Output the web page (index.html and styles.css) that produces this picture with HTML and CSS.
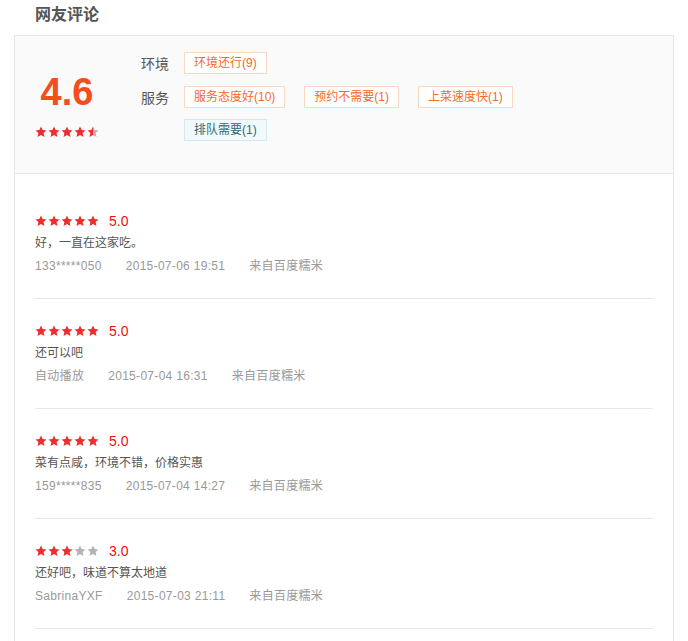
FILE: index.html
```html
<!DOCTYPE html>
<html lang="zh-CN">
<head>
    <meta charset="UTF-8">
    <meta name="viewport" content="width=device-width, initial-scale=1.0">
    <title>网友评论</title>
    <link rel="stylesheet" href="styles.css">
</head>
<body>
    <!-- 星星图形 -->
    <svg class="defs" width="0" height="0">
        <defs>
            <linearGradient id="half">
                <stop offset="50%" stop-color="#ee2d2d"/>
                <stop offset="50%" stop-color="#b3b3b3"/>
            </linearGradient>
            <symbol id="star" viewBox="0 0 24 24">
                <path d="M12 1l3.3 7.1 7.7.8-5.8 5.2 1.7 7.7L12 17.8l-6.9 4 1.7-7.7L1 8.9l7.7-.8z"/>
            </symbol>
        </defs>
    </svg>

    <div class="wrap">
        <div class="title">网友评论</div>

        <div class="box">
            <!-- 评分汇总 -->
            <div class="summary">
                <div class="score_col">
                    <div class="score">4.6</div>
                    <div class="stars">
                        <svg class="on"><use href="#star"/></svg>
                        <svg class="on"><use href="#star"/></svg>
                        <svg class="on"><use href="#star"/></svg>
                        <svg class="on"><use href="#star"/></svg>
                        <svg class="half"><use href="#star"/></svg>
                    </div>
                </div>
                <div class="tags">
                    <div class="tag_row">
                        <span class="label">环境</span>
                        <span class="tag">环境还行(9)</span>
                    </div>
                    <div class="tag_row">
                        <span class="label">服务</span>
                        <span class="tag">服务态度好(10)</span>
                        <span class="tag">预约不需要(1)</span>
                        <span class="tag">上菜速度快(1)</span>
                    </div>
                    <div class="tag_row">
                        <span class="label"></span>
                        <span class="tag tag_blue">排队需要(1)</span>
                    </div>
                </div>
            </div>

            <!-- 评论列表 -->
            <div class="list">
                <div class="review">
                    <div class="rate">
                        <span class="stars">
                            <svg class="on"><use href="#star"/></svg>
                            <svg class="on"><use href="#star"/></svg>
                            <svg class="on"><use href="#star"/></svg>
                            <svg class="on"><use href="#star"/></svg>
                            <svg class="on"><use href="#star"/></svg>
                        </span>
                        <span class="num">5.0</span>
                    </div>
                    <div class="text">好，一直在这家吃。</div>
                    <div class="meta"><span>133*****050</span><span>2015-07-06 19:51</span><span>来自百度糯米</span></div>
                </div>
                <div class="review">
                    <div class="rate">
                        <span class="stars">
                            <svg class="on"><use href="#star"/></svg>
                            <svg class="on"><use href="#star"/></svg>
                            <svg class="on"><use href="#star"/></svg>
                            <svg class="on"><use href="#star"/></svg>
                            <svg class="on"><use href="#star"/></svg>
                        </span>
                        <span class="num">5.0</span>
                    </div>
                    <div class="text">还可以吧</div>
                    <div class="meta"><span>自动播放</span><span>2015-07-04 16:31</span><span>来自百度糯米</span></div>
                </div>
                <div class="review">
                    <div class="rate">
                        <span class="stars">
                            <svg class="on"><use href="#star"/></svg>
                            <svg class="on"><use href="#star"/></svg>
                            <svg class="on"><use href="#star"/></svg>
                            <svg class="on"><use href="#star"/></svg>
                            <svg class="on"><use href="#star"/></svg>
                        </span>
                        <span class="num">5.0</span>
                    </div>
                    <div class="text">菜有点咸，环境不错，价格实惠</div>
                    <div class="meta"><span>159*****835</span><span>2015-07-04 14:27</span><span>来自百度糯米</span></div>
                </div>
                <div class="review">
                    <div class="rate">
                        <span class="stars">
                            <svg class="on"><use href="#star"/></svg>
                            <svg class="on"><use href="#star"/></svg>
                            <svg class="on"><use href="#star"/></svg>
                            <svg class="off"><use href="#star"/></svg>
                            <svg class="off"><use href="#star"/></svg>
                        </span>
                        <span class="num">3.0</span>
                    </div>
                    <div class="text">还好吧，味道不算太地道</div>
                    <div class="meta"><span>SabrinaYXF</span><span>2015-07-03 21:11</span><span>来自百度糯米</span></div>
                </div>
            </div>
        </div>
    </div>
</body>
</html>
```

FILE: styles.css
```css
body{
    margin: 0;
    font-family: "Liberation Sans", "Noto Sans CJK SC", sans-serif;
    color: #555;
    background-color: #fff;
}
.defs{
    position: absolute;
    width: 0;
    height: 0;
}
.wrap{
    width: 660px;
    margin-left: 14px;
}
.title{
    height: 35px;
    line-height: 30px;
    padding-left: 21px;
    font-size: 16px;
    font-weight: bold;
    color: #555;
}
.box{
    border: 1px solid #e5e5e5;
}

/* 评分汇总 */
.summary{
    height: 138px;
    box-sizing: border-box;
    padding: 16px 20px 0;
    background-color: #fafafa;
    border-bottom: 1px solid #e5e5e5;
    display: flex;
}
.score_col{
    width: 64px;
    padding-top: 20px;
    text-align: center;
}
.score{
    font-size: 38px;
    line-height: 40px;
    font-weight: bold;
    color: #f44d1e;
}
.score_col .stars{
    margin-top: 14px;
}
.stars{
    display: inline-flex;
    gap: 1px;
}
.stars svg{
    width: 12px;
    height: 12px;
}
.stars .on{
    fill: #ee2d2d;
}
.stars .off{
    fill: #b3b3b3;
}
.stars .half{
    fill: url(#half);
}
.tags{
    margin-left: 42px;
}
.tag_row{
    display: flex;
    align-items: center;
    height: 22px;
    margin-bottom: 11.5px;
}
.label{
    width: 43px;
    font-size: 14px;
    color: #555;
}
.tag{
    height: 20px;
    line-height: 20px;
    padding: 0 9px;
    margin-right: 19px;
    font-size: 12px;
    color: #f56a2a;
    background-color: #fff;
    border: 1px solid #fbd8c2;
}
.tag_blue{
    color: #2f6b7a;
    background-color: #f2f9fb;
    border-color: #d6ebf1;
}

/* 评论列表 */
.list{
    padding: 15px 20px;
}
.review{
    padding: 20px 0;
    border-bottom: 1px solid #e6e6e6;
}
.rate{
    display: flex;
    align-items: center;
    height: 23px;
}
.text,
.meta{
    line-height: 23px;
}
.num{
    margin-left: 10px;
    font-size: 14px;
    color: #f20d0d;
}
.text{
    font-size: 12px;
    color: #555;
}
.meta{
    font-size: 12px;
    color: #999;
    letter-spacing: 0.3px;
}
.meta span{
    margin-right: 24px;
}
```
